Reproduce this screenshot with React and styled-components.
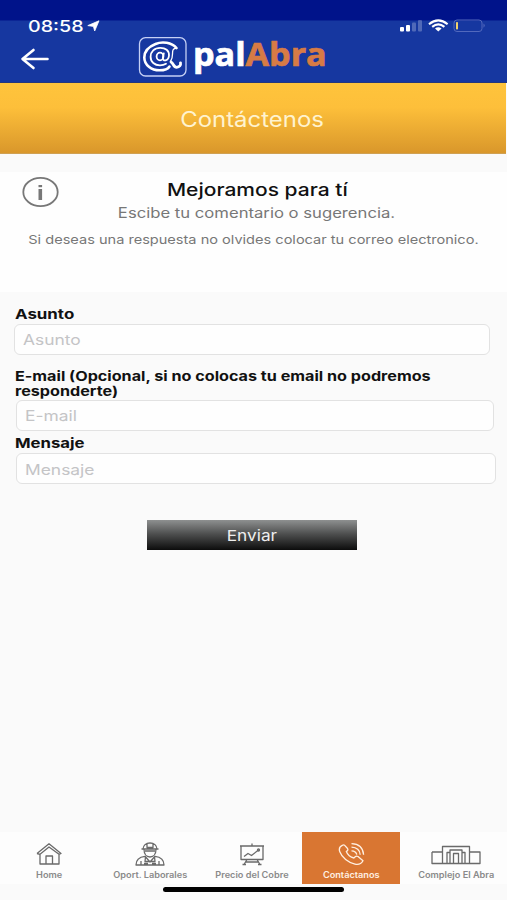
import React from "react";
import styled, { createGlobalStyle } from "styled-components";

const StatusIcons = () => (
  <svg width="88" height="16" viewBox="0 0 88 16">
    <g fill="#fff">
      <rect x="1" y="9" width="4" height="4.5" rx="1" />
      <rect x="7" y="7" width="4" height="6.5" rx="1" />
      <rect x="13" y="4.5" width="4" height="9" rx="1" opacity="0.25" />
      <rect x="19" y="2" width="4" height="11.5" rx="1" opacity="0.25" />
    </g>
    <g fill="none" stroke="#fff" strokeWidth="2.1">
      <path d="M30 6.2Q39.3 -1.6 48.6 6.2" />
      <path d="M33.2 8.9Q39.3 3.8 45.4 8.9" />
    </g>
    <path d="M36 10.6Q39.3 8.1 42.6 10.6L39.3 13.5Z" fill="#fff" />
    <rect x="55" y="2" width="28" height="11.5" rx="3" fill="none" stroke="#5269bd" />
    <path d="M84.5 5.6Q87 7.6 84.5 9.8Z" fill="#5269bd" />
    <rect x="57" y="4" width="2" height="7.5" rx="0.8" fill="#f2d26c" />
  </svg>
);

const LocationIcon = () => (
  <svg width="13" height="12" viewBox="0 0 13 12">
    <path
      d="M12 0.8L7.7 11L6.4 6.4L0.8 5.6Z"
      fill="#fff"
      stroke="#fff"
      strokeWidth="0.8"
      strokeLinejoin="round"
    />
  </svg>
);

const BackIcon = () => (
  <svg width="30" height="22" viewBox="0 0 30 22">
    <path
      d="M27.5 11H3M13.5 2L2.5 11L13.5 20"
      fill="none"
      stroke="#fff"
      strokeWidth="2.6"
      strokeLinecap="round"
      strokeLinejoin="round"
    />
  </svg>
);

const LogoMark = () => (
  <svg width="50" height="42" viewBox="0 0 50 42">
    <rect x="1.5" y="1.7" width="46.5" height="38.3" rx="6" fill="none" stroke="#c5d0f5" strokeWidth="1.3" />
    <g fill="none" stroke="#fff" strokeLinecap="round">
      <path
        d="M38.5 12C33.5 6.5 24.5 5 17.5 8C10 11 6.3 16 6.3 21.5C6.3 29 13.5 34.3 21.5 34.3C26.5 34.3 30 33 31.5 30.5"
        strokeWidth="2.6"
      />
      <path
        d="M25.8 17.3L24.8 22.2C24.5 25.5 30.5 25.3 31 19.5C31.2 14.5 27.5 11.8 22.3 11.8C16.3 11.8 12.6 15.8 12.6 20.7C12.6 26 16.6 29.3 22 29.3C24.7 29.3 26.5 28.7 28 27.8"
        strokeWidth="1.8"
      />
      <ellipse cx="22" cy="20.5" rx="3.4" ry="3.8" strokeWidth="1.8" />
      <path d="M38.5 12C34.5 12.5 34.5 15 34.5 18C34.5 21 34 23.5 32.5 25.5" strokeWidth="1.3" />
      <path
        d="M33 26C35.8 27.5 35.3 31.3 38.7 31.3C41.5 31.3 43 29.3 42.5 26.8"
        strokeWidth="2.8"
      />
    </g>
  </svg>
);

const InfoIcon = () => (
  <svg width="38" height="32" viewBox="0 0 38 32">
    <g fill="none" stroke="#777" strokeWidth="1.8">
      <ellipse cx="18.5" cy="16" rx="17.2" ry="14.2" />
      <path d="M18.3 13V24" strokeWidth="3.6" />
      <path d="M18.3 9V11.2" strokeWidth="3.6" />
    </g>
  </svg>
);

const HomeIcon = () => (
  <svg width="28" height="24" viewBox="0 0 28 24">
    <path d="M2 11.5L14 1.8L26 11.5L24 12.3V22H5V12.3L2 11.5M5 12.3L14 5L24 12.3M11 22V14H17.5V22" />
  </svg>
);

const WorkerIcon = () => (
  <svg width="30" height="24" viewBox="0 0 30 24">
    <path d="M8 7.3C8 3.5 11 1 15 1S22 3.5 22 7.3M6.5 7H23.5M12 1.7V5.5H18V1.7M9 7.3C9 12 11.5 15 15 15S21 12 21 7.3M10 9H20" />
    <path d="M1 23C1 17.5 4 15 10 14.3L15 20L20 14.3C26 15 29 17.5 29 23ZM6 23V19M24 23V19M10.5 15L10 19.5H20L19.5 15M9 21.5H13M17 21.5H21" />
  </svg>
);

const ChartIcon = () => (
  <svg width="28" height="24" viewBox="0 0 28 24">
    <path d="M2 4H26M3 4V17.5H25V4M14 3.5V1.5M9 17.5L6 22.5M19 17.5L22 22.5M8 20H20M4.5 22.5H8M20 22.5H23.5" />
    <path d="M6 14.5L10 11.5L13.5 13.5L20.5 8" />
    <circle cx="20.5" cy="8" r="1" />
  </svg>
);

const PhoneIcon = () => (
  <svg width="28" height="24" viewBox="0 0 28 24">
    <path d="M5.7 3.2C2.6 4.5 1.7 6.8 2.8 9.8C5 15.6 11 20.6 18 22.2C21.5 23 24.5 21.5 26 18.8L21 14.5C19.5 13.8 18 14.5 17 16C13.7 15.3 10.5 12.6 9.3 9.6C11 8.5 11.3 7.5 10.3 6.2L7.7 3.4C7.1 2.8 6.5 2.7 5.7 3.2Z" />
    <path d="M14.5 8.8C17.5 8.9 19.3 10.2 19.8 12.7M14.5 5.2C19.5 5.4 22.8 8.2 23.2 12.7M14.5 1.7C21.5 1.9 26 5.9 26.6 12.7" />
  </svg>
);

const BuildingIcon = () => (
  <svg width="52" height="24" viewBox="0 0 52 24">
    <path d="M2 10H12.5M2 10V21.5H50V10H39.5M12.5 21.5V4.5H39.5V21.5M17 21.5V10.5H20M35 21.5V10.5H32M20 21.5V8H32V21.5M23.5 21.5V11.5H28.5V21.5" />
  </svg>
);

const tabs = [
  { label: "Home", icon: HomeIcon },
  { label: "Oport. Laborales", icon: WorkerIcon },
  { label: "Precio del Cobre", icon: ChartIcon },
  { label: "Contáctanos", icon: PhoneIcon, active: true },
  { label: "Complejo El Abra", icon: BuildingIcon },
];

const App = () => {
  return (
    <>
      <GlobalStyle />
      <Screen>
        <Header>
          <StatusBar>
            <Time>
              <Wide $x={1.27} $left>
                08:58
              </Wide>
              <LocationIcon />
            </Time>
            <StatusIcons />
          </StatusBar>
          <Brand>
            <BackIcon />
            <Logo>
              <LogoMark />
              <LogoText>
                pal<span>Abra</span>
              </LogoText>
            </Logo>
          </Brand>
        </Header>
        <Banner>
          <Wide $x={1.14}>Contáctenos</Wide>
        </Banner>
        <Intro>
          <InfoIcon />
          <IntroTitle>
            <Wide $x={1.2}>Mejoramos para tí</Wide>
          </IntroTitle>
          <IntroText>
            <Wide $x={1.19}>Escibe tu comentario o sugerencia.</Wide>
          </IntroText>
          <IntroNote>
            <Wide $x={1.195}>
              Si deseas una respuesta no olvides colocar tu correo electronico.
            </Wide>
          </IntroNote>
        </Intro>
        <Form>
          <Label>
            <Wide $x={1.25} $left>
              Asunto
            </Wide>
          </Label>
          <Field $start={14} $width={476} $gap={14}>
            <Wide $x={1.2} $left>
              Asunto
            </Wide>
          </Field>
          <Label $gap={0}>
            <Wide $x={1.197} $left>
              E-mail (Opcional, si no colocas tu email no podremos
              <br />
              responderte)
            </Wide>
          </Label>
          <Field $start={16} $width={478} $gap={5}>
            <Wide $x={1.2} $left>
              E-mail
            </Wide>
          </Field>
          <Label $gap={2}>
            <Wide $x={1.24} $left>
              Mensaje
            </Wide>
          </Label>
          <Field $start={16} $width={480} $gap={36}>
            <Wide $x={1.2} $left>
              Mensaje
            </Wide>
          </Field>
          <Submit>
            <Wide $x={1.15}>Enviar</Wide>
          </Submit>
        </Form>
        <TabBar>
          {tabs.map(({ label, icon: Icon, active }) => (
            <Tab key={label} $active={active}>
              <Icon />
              <Wide $x={1.08}>{label}</Wide>
            </Tab>
          ))}
        </TabBar>
        <HomeIndicator />
      </Screen>
    </>
  );
};

export default App;

const GlobalStyle = createGlobalStyle`
  * {
    box-sizing: border-box;
  }

  body {
    margin: 0;
    background: #fafafa;
    font-family: Inter, "Liberation Sans", sans-serif;
  }

  svg {
    display: block;
    flex: none;
  }
`;

const Wide = styled.span`
  display: inline-block;
  white-space: nowrap;
  transform: scaleX(${(props) => props.$x});
  transform-origin: ${(props) => (props.$left ? "left" : "center")};
`;

const Screen = styled.main`
  width: 507px;
  height: 900px;
  overflow: hidden;
  display: flex;
  flex-direction: column;
  background: #fafafa;
`;

const Header = styled.header`
  height: 83px;
  background: linear-gradient(#00138a 20px, #1637a0 21px);
  border-bottom: 1px solid #24377e;
`;

const StatusBar = styled.div`
  height: 36px;
  padding: 18px 20px 0 28px;
  display: flex;
  justify-content: space-between;
`;

const Time = styled.div`
  display: flex;
  align-items: center;
  gap: 15px;
  height: 16px;
  color: #fff;
  font-size: 15.5px;
  font-weight: 500;
`;

const Brand = styled.div`
  display: flex;
  height: 42px;
  padding: 0 0 0 20px;

  > svg {
    margin-top: 12px;
  }
`;

const Logo = styled.div`
  display: flex;
  margin-left: 88px;
`;

const LogoText = styled.div`
  margin-left: 5px;
  color: #fff;
  font-family: "Open Sans", sans-serif;
  font-size: 32px;
  font-weight: 700;
  line-height: 36px;
  -webkit-text-stroke: 0.7px currentColor;
  transform: scaleX(1.065);
  transform-origin: left;

  span {
    color: #d77b45;
  }
`;

const Banner = styled.h1`
  width: 506px;
  height: 71px;
  margin: 0;
  display: flex;
  align-items: center;
  justify-content: center;
  padding: 2px 2px 0 0;
  background: linear-gradient(#ffc43c 0%, #fdbf3a 35%, #d9972b 100%);
  border-bottom: 1px solid #cfa052;
  color: #fff3cf;
  font-size: 21px;
  font-weight: 400;
`;

const Intro = styled.section`
  height: 120px;
  margin-top: 18px;
  display: grid;
  grid-template-columns: 50px 1fr 65px;
  grid-template-rows: 27px 19px 35px;
  padding: 4px 0 0 22px;
  background: #fefefe;
  text-align: center;

  p,
  h2 {
    margin: 0;
    display: flex;
    justify-content: center;
    align-items: center;
  }
`;

const IntroTitle = styled.h2`
  color: #111;
  font-size: 17.5px;
  font-weight: 500;
`;

const IntroText = styled.p`
  grid-column: 1 / -1;
  padding-right: 16px;
  color: #777;
  font-size: 14px;
`;

const IntroNote = styled.p`
  grid-column: 1 / -1;
  padding-right: 22px;
  color: #777;
  font-size: 12.2px;
`;

const Form = styled.section`
  flex: 1;
  padding-top: 15px;
`;

const Label = styled.div`
  padding: 0 0 ${(props) => props.$gap ?? 1}px 15px;
  color: #111;
  font-size: 13.5px;
  font-weight: 700;
  line-height: 15.5px;

  > span {
    display: block;
    width: max-content;
  }
`;

const Field = styled.div`
  width: ${(props) => props.$width}px;
  height: 31px;
  margin: 0 0 ${(props) => props.$gap}px ${(props) => props.$start}px;
  padding: 1px 0 0 8px;
  display: flex;
  align-items: center;
  background: #fefefe;
  border: 1px solid #e2e2e2;
  border-radius: 6px;
  color: #c4c4c6;
  font-size: 14.5px;
`;

const Submit = styled.button`
  display: block;
  width: 210px;
  height: 30px;
  margin-left: 147px;
  padding: 0;
  border: 0;
  background: linear-gradient(#8e9090 0%, #4c4d4d 48%, #0c0c0c 100%);
  color: #eee;
  font-family: Inter, "Liberation Sans", sans-serif;
  font-size: 15px;
`;

const TabBar = styled.nav`
  height: 52px;
  display: grid;
  grid-template-columns: 98px 104px 100px 98px 100px;
  background: #fdfdfd;

  > :last-child {
    margin: 0 -6px 0 6px;
  }
`;

const Tab = styled.div`
  display: flex;
  flex-direction: column;
  align-items: center;
  padding-top: 10px;
  gap: 3px;
  background: ${(props) => (props.$active ? "#d97632" : "transparent")};
  color: ${(props) => (props.$active ? "#fff0e2" : "#8a8a8a")};
  font-size: 8.5px;
  font-weight: 600;
  line-height: 12px;

  svg {
    fill: none;
    stroke: ${(props) => (props.$active ? "#fff0e2" : "#6a6a6a")};
    stroke-width: 1.3;
    stroke-linejoin: round;
  }
`;

const HomeIndicator = styled.div`
  width: 181px;
  height: 5px;
  margin: 3px 0 8px 163px;
  border-radius: 3px;
  background: #000;
`;
